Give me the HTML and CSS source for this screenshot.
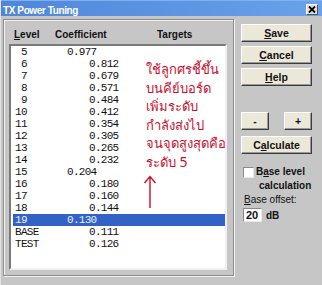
FILE: index.html
```html
<!DOCTYPE html>
<html lang="en">
<head>
  <meta charset="UTF-8">
  <title>TX Power Tuning</title>
  <link rel="stylesheet" href="styles.css">
</head>
<body>
  <div class="dialog">
    <div class="titlebar">
      <span class="title">TX Power Tuning</span>
      <span class="close">
        <svg width="8" height="7" viewBox="0 0 8 7"><path d="M1 0.5 L7 6.5 M7 0.5 L1 6.5" stroke="#000" stroke-width="1.8"/></svg>
      </span>
    </div>

    <div class="content">
      <div class="group">
        <div class="colhead">
          <span class="h-level"><u>L</u>evel</span>
          <span class="h-coef">Coefficient</span>
          <span class="h-target">Targets</span>
        </div>

        <div class="listbox">
          <div class="row ref"><span class="lvl">&nbsp;5</span><span class="coef">0.977</span></div>
          <div class="row"><span class="lvl">&nbsp;6</span><span class="coef">0.812</span></div>
          <div class="row"><span class="lvl">&nbsp;7</span><span class="coef">0.679</span></div>
          <div class="row"><span class="lvl">&nbsp;8</span><span class="coef">0.571</span></div>
          <div class="row"><span class="lvl">&nbsp;9</span><span class="coef">0.484</span></div>
          <div class="row"><span class="lvl">10</span><span class="coef">0.412</span></div>
          <div class="row"><span class="lvl">11</span><span class="coef">0.354</span></div>
          <div class="row"><span class="lvl">12</span><span class="coef">0.305</span></div>
          <div class="row"><span class="lvl">13</span><span class="coef">0.265</span></div>
          <div class="row"><span class="lvl">14</span><span class="coef">0.232</span></div>
          <div class="row ref"><span class="lvl">15</span><span class="coef">0.204</span></div>
          <div class="row"><span class="lvl">16</span><span class="coef">0.180</span></div>
          <div class="row"><span class="lvl">17</span><span class="coef">0.160</span></div>
          <div class="row"><span class="lvl">18</span><span class="coef">0.144</span></div>
          <div class="row ref selected"><span class="lvl">19</span><span class="coef">0.130</span></div>
          <div class="row"><span class="lvl">BASE</span><span class="coef">0.111</span></div>
          <div class="row"><span class="lvl">TEST</span><span class="coef">0.126</span></div>

          <!-- annotation drawn over the targets column -->
          <div class="note">
            <div>ใช้ลูกศรชี้ขึ้น</div>
            <div>บนคีย์บอร์ด</div>
            <div>เพิ่มระดับ</div>
            <div>กำลังส่งไป</div>
            <div>จนจุดสูงสุดคือ</div>
            <div>ระดับ <span class="num">5</span></div>
            <svg class="arrow" width="14" height="33" viewBox="0 0 14 33">
              <path d="M7 1.5 L7 33 M1.5 8 L7 1.5 L12.5 8" fill="none" stroke="#c8102e" stroke-width="1.4"/>
            </svg>
          </div>
        </div>
      </div>

      <div class="side">
        <button class="btn"><u>S</u>ave</button>
        <button class="btn"><u>C</u>ancel</button>
        <button class="btn"><u>H</u>elp</button>
        <div class="steps">
          <button class="btn small">-</button>
          <button class="btn small">+</button>
        </div>
        <button class="btn calc">C<u>a</u>lculate</button>

        <div class="check">
          <span class="box"></span>
          <span class="check-label">B<u>a</u>se level<br><span class="wrap">calculation</span></span>
        </div>
        <div class="offset-label"><u>B</u>ase offset:</div>
        <div class="offset">
          <span class="field">20</span>
          <span class="unit">dB</span>
        </div>
      </div>
    </div>
  </div>
</body>
</html>
```

FILE: styles.css
```css
body {
  margin: 0;
  background-color: #c6c6c6;
  font-family: "Liberation Sans", Arial, sans-serif;
  font-size: 10px;
  color: #111;
}

.dialog {
  width: 322px;
  height: 285px;
  overflow: hidden;
  box-sizing: border-box;
  border-left: 1px solid #e2e2e2;
}

.titlebar {
  height: 16px;
  box-sizing: border-box;
  padding: 3px 4px 0 2px;
  display: flex;
  justify-content: space-between;
  align-items: flex-start;
  background: linear-gradient(to right, #4f86d8, #6aa1ea);
  border-top: 1px solid #7fb0f0;
}

.title {
  color: #fff;
  font-weight: bold;
  letter-spacing: -0.4px;
  line-height: 12px;
  padding-top: 1px;
}

.close {
  width: 12px;
  height: 11px;
  box-sizing: border-box;
  display: flex;
  align-items: center;
  justify-content: center;
  background-color: #dedede;
  border: 1px solid;
  border-color: #fff #555 #555 #fff;
}

.content {
  display: flex;
  align-items: flex-start;
}

/* left frame with the table */
.group {
  margin: 3px 0 0 2px;
  width: 231px;
  height: 257px;
  box-sizing: border-box;
  border: 1px solid #8c8c8c;
  box-shadow: inset 1px 1px 0 #f2f2f2, 1px 1px 0 #f2f2f2;
}

.colhead {
  display: flex;
  padding: 9px 0 0 10px;
  font-weight: bold;
  line-height: 12px;
}

.h-level {
  width: 41px;
}

.h-coef {
  width: 102px;
}

.listbox {
  position: relative;
  margin: 3px 0 0 5px;
  width: 218px;
  height: 226px;
  box-sizing: border-box;
  background-color: #fff;
  border: 2px solid;
  border-color: #7a7a7a #f0f0f0 #f0f0f0 #7a7a7a;
  font-family: "Liberation Mono", "Courier New", monospace;
  font-size: 11px;
  letter-spacing: -0.7px;
  color: #111;
}

.row {
  display: flex;
  margin-left: 2px;
  padding-left: 2px;
  height: 12px;
  line-height: 12px;
}

.lvl {
  width: 52px;
  white-space: pre;
}

.coef {
  padding-left: 22px;
}

.row.ref .coef {
  padding-left: 0;
}

.row.selected {
  background-color: #3262c6;
  color: #eef2ff;
}

.note {
  position: absolute;
  left: 135px;
  top: 14px;
  font-family: "Noto Sans", "DejaVu Sans", sans-serif;
  font-size: 13px;
  line-height: 18.6px;
  letter-spacing: 0;
  color: #c8102e;
  white-space: nowrap;
}

.note .num {
  font-size: 14px;
}

.arrow {
  display: block;
  margin: 3px 0 0 -3px;
}

/* right column */
.side {
  margin-left: 7px;
  padding-top: 8px;
  width: 71px;
  display: flex;
  flex-direction: column;
}

.btn {
  height: 18px;
  width: 100%;
  margin: 0 0 4px 0;
  padding: 0;
  font-family: "Liberation Sans", Arial, sans-serif;
  font-size: 10.5px;
  font-weight: bold;
  color: #111;
  background-color: #ece8d9;
  border: 1px solid;
  border-color: #fff #3c3c3c #3c3c3c #fff;
  box-shadow: inset -1px -1px 0 #9a9a9a;
}

.steps {
  display: flex;
  justify-content: space-between;
  margin-top: 22px;
}

.btn.small {
  width: 28px;
  margin-bottom: 6px;
}

.btn.calc {
  margin-bottom: 0;
}

.check {
  display: flex;
  align-items: flex-start;
  margin: 11px 0 0 2px;
  font-weight: bold;
  line-height: 14px;
}

.box {
  width: 9px;
  height: 9px;
  margin: 2px 2px 0 0;
  background-color: #fff;
  border: 1px solid;
  border-color: #8a8a8a #e8e8e8 #e8e8e8 #8a8a8a;
}

.wrap {
  padding-left: 3px;
}

.offset-label {
  padding-left: 3px;
  line-height: 14px;
}

.offset {
  display: flex;
  align-items: center;
  margin: 1px 0 0 2px;
  font-weight: bold;
}

.field {
  width: 19px;
  height: 14px;
  box-sizing: border-box;
  padding-left: 2px;
  line-height: 12px;
  font-size: 11px;
  background-color: #fff;
  border: 1px solid;
  border-color: #8a8a8a #e8e8e8 #e8e8e8 #8a8a8a;
}

.unit {
  margin-left: 4px;
}
```
